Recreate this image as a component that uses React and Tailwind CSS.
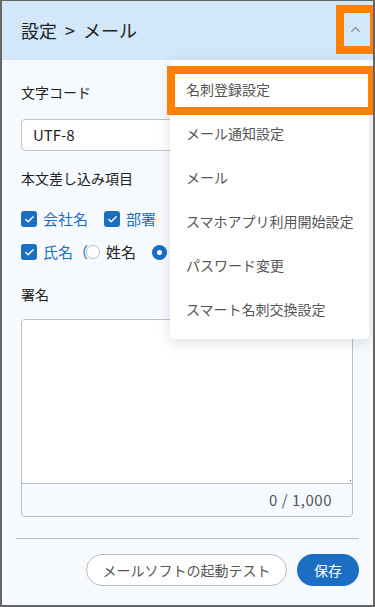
import { ChevronUp, Check } from "lucide-react";

const font = { fontFamily: '"Noto Sans CJK JP", "Noto Sans", sans-serif' };

const menuItems = [
  "名刺登録設定",
  "メール通知設定",
  "メール",
  "スマホアプリ利用開始設定",
  "パスワード変更",
  "スマート名刺交換設定",
];

const CheckBox = () => (
  <span className="flex items-center justify-center w-[16px] h-[16px] rounded-[3px] bg-[#1b6ec2]">
    <Check className="w-[11px] h-[11px] text-white" strokeWidth={3} />
  </span>
);

export default function App() {
  return (
    <div className="relative w-[375px] h-[607px] overflow-hidden box-border border-2 border-t border-[#666] bg-[#f6faff]" style={font}>
      {/* header */}
      <div className="h-[59px] bg-[#d3e7fa] flex items-center justify-between pl-[19px] pr-[5px]">
        <span className="text-[18px] text-[#222] flex items-center">
          設定<span className="mx-[8px]">&gt;</span>メール
        </span>
        <button className="w-[25px] h-[31px] flex items-center justify-center mt-[-2px]">
          <ChevronUp className="w-[15px] h-[15px] text-[#888]" strokeWidth={2} />
        </button>
      </div>

      {/* form */}
      <div className="pl-[19px] pr-[20px] pt-[22px] text-[14px] text-[#222]">
        <div className="leading-[20px]">文字コード</div>
        <div className="mt-[17px] h-[32px] rounded-[4px] border border-[#c2c2ca] bg-white flex items-center px-[11px] text-[15px]">
          UTF-8
        </div>
        <div className="mt-[17px] leading-[20px]">本文差し込み項目</div>

        <div className="mt-[19px] h-[24px] flex items-center text-[#1b6ec2] text-[15px]">
          <CheckBox />
          <span className="ml-[6px]">会社名</span>
          <span className="ml-[16px]"><CheckBox /></span>
          <span className="ml-[6px]">部署</span>
        </div>
        <div className="mt-[9px] h-[24px] flex items-center text-[15px]">
          <CheckBox />
          <span className="ml-[6px] text-[#1b6ec2]">氏名（</span>
          <span className="ml-[-2px] w-[14px] h-[14px] rounded-full border border-[#bbb] bg-white" />
          <span className="ml-[6px] text-[#222]">姓名</span>
          <span className="ml-[16px] w-[15px] h-[15px] rounded-full bg-[#1b6ec2] flex items-center justify-center">
            <span className="w-[5px] h-[5px] rounded-full bg-white" />
          </span>
        </div>

        <div className="mt-[20px] leading-[20px]">署名</div>
        <div className="mt-[15px] rounded-[4px] border border-[#bdbdc4] overflow-hidden">
          <div className="relative h-[164px] bg-white border-b border-[#bdbdc4]">
            <span className="absolute right-[1px] bottom-[2px] w-[1px] h-[1px] bg-[#555]" />
          </div>
          <div className="h-[32px] flex items-center justify-end pr-[20px] text-[#555] text-[15px] tracking-[0.5px]">
            0 / 1,000
          </div>
        </div>
      </div>

      {/* footer */}
      <div className="px-[14px]">
        <div className="mt-[21px] h-px bg-[#bbb]" />
        <div className="mt-[15px] flex justify-end gap-[10px]">
          <button className="w-[201px] h-[32px] rounded-full border border-[#bbb] bg-white text-[14px] text-[#555]">
            メールソフトの起動テスト
          </button>
          <button className="w-[62px] h-[32px] rounded-full bg-[#1b6ec2] text-[14px] text-white">
            保存
          </button>
        </div>
      </div>

      {/* dropdown menu */}
      <div className="absolute left-[168px] top-[59px] w-[199px] h-[279px] bg-white rounded-[4px] shadow-[0_4px_14px_rgba(0,0,0,0.12)] py-[7px]">
        {menuItems.map((item) => (
          <div key={item} className="h-[44px] flex items-center px-[16px] text-[14px] text-[#555] whitespace-nowrap">
            {item}
          </div>
        ))}
      </div>

      {/* annotation highlights */}
      <div className="absolute left-[165px] top-[65px] w-[209px] h-[49px] border-[8px] border-[#ff8000]" />
      <div className="absolute left-[334px] top-[4px] w-[42px] h-[49px] border-[8px] border-[#ff8000]" />
    </div>
  );
}
